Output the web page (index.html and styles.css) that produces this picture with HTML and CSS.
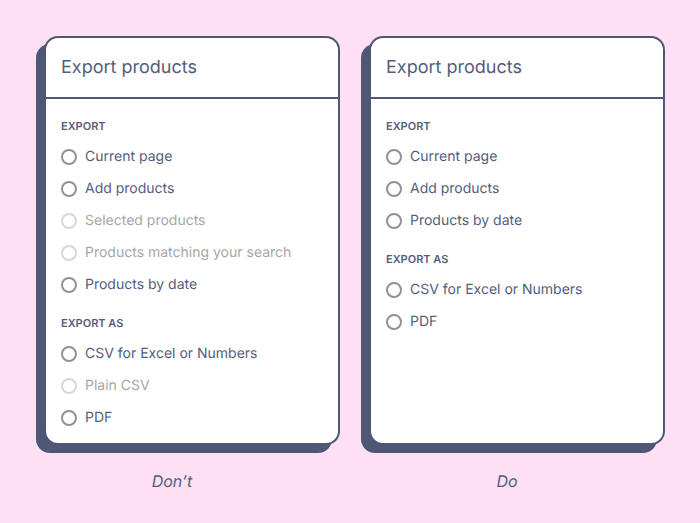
FILE: index.html
```html
<!DOCTYPE html>
<html lang="en">
<head>
<meta charset="utf-8">
<title>Export products</title>
<link rel="stylesheet" href="styles.css">
</head>
<body>
<main class="comparison">
  <figure class="example">
    <form class="card">
      <h2 class="card-title">Export products</h2>
      <div class="card-body">
        <fieldset class="group">
          <legend class="group-title">EXPORT</legend>
          <label class="option"><input type="radio" name="export">Current page</label>
          <label class="option"><input type="radio" name="export">Add products</label>
          <label class="option"><input type="radio" name="export" disabled>Selected products</label>
          <label class="option"><input type="radio" name="export" disabled>Products matching your search</label>
          <label class="option"><input type="radio" name="export">Products by date</label>
        </fieldset>
        <fieldset class="group">
          <legend class="group-title">EXPORT AS</legend>
          <label class="option"><input type="radio" name="format">CSV for Excel or Numbers</label>
          <label class="option"><input type="radio" name="format" disabled>Plain CSV</label>
          <label class="option"><input type="radio" name="format">PDF</label>
        </fieldset>
      </div>
    </form>
    <figcaption class="verdict verdict-dont">Don’t</figcaption>
  </figure>
  <figure class="example">
    <form class="card">
      <h2 class="card-title">Export products</h2>
      <div class="card-body">
        <fieldset class="group">
          <legend class="group-title">EXPORT</legend>
          <label class="option"><input type="radio" name="export">Current page</label>
          <label class="option"><input type="radio" name="export">Add products</label>
          <label class="option"><input type="radio" name="export">Products by date</label>
        </fieldset>
        <fieldset class="group">
          <legend class="group-title">EXPORT AS</legend>
          <label class="option"><input type="radio" name="format">CSV for Excel or Numbers</label>
          <label class="option"><input type="radio" name="format">PDF</label>
        </fieldset>
      </div>
    </form>
    <figcaption class="verdict verdict-do">Do</figcaption>
  </figure>
</main>
</body>
</html>
```
FILE: styles.css
```css
* {
  box-sizing: border-box;
}

body {
  margin: 0;
  background: #fee0f4;
  color: #535d7c;
  font-family: Inter, "Liberation Sans", sans-serif;
  text-rendering: geometricPrecision;
}

.comparison {
  display: grid;
  grid-template-columns: 1fr 1fr;
  gap: 29px;
  padding: 36px 35px 28px 44px;
}

.example {
  display: flex;
  flex-direction: column;
  margin: 0;
}

.card {
  flex: 1;
  border: 2px solid #4e5774;
  border-radius: 14px;
  background: #fff;
  box-shadow: -8px 8px 0 #4e5774;
}

.card-title {
  margin: 0;
  padding: 15px 15px 14px;
  border-bottom: 2px solid #4e5774;
  font-size: 18px;
  font-weight: 400;
  line-height: 30px;
}

.card-body {
  display: flex;
  flex-direction: column;
  gap: 10px;
  padding: 15px 15px 9px;
}

.group {
  min-width: 0;
  margin: 0;
  padding: 0;
  border: 0;
}

.group-title {
  padding: 0 0 3px;
  font-size: 11px;
  font-weight: 600;
  line-height: 24px;
}

.option {
  display: flex;
  align-items: center;
  gap: 8px;
  font-size: 14px;
  line-height: 32px;
}

.option input {
  appearance: none;
  width: 16px;
  height: 16px;
  margin: 0;
  border: 2px solid #8e9296;
  border-radius: 50%;
}

.option:has(:disabled) {
  color: #a6a6a6;
}

.option input:disabled {
  border-color: #d5d8db;
}

.verdict {
  padding-top: 24px;
  font-size: 16px;
  font-style: italic;
  font-weight: 400;
  line-height: 24px;
  text-align: center;
}

.verdict-dont {
  padding-right: 40px;
}

.verdict-do {
  padding-right: 20px;
}
```
